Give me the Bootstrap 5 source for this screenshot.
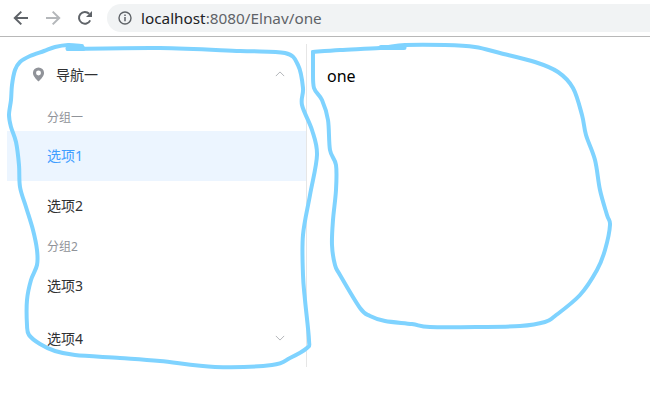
<!doctype html>
<html lang="zh-CN">
<head>
<meta charset="utf-8">
<title>Elnav</title>
<link rel="stylesheet" href="https://cdn.jsdelivr.net/npm/bootstrap@5.3.0/dist/css/bootstrap.min.css">
<style>
html,body{height:412px;overflow:hidden;background:#fff}
body{font-family:"Noto Sans","Noto Sans CJK SC",sans-serif;position:relative}
.chrome-bar{height:37px;border-bottom:1px solid #b8b8b8;padding-left:5px}
.tool-btn{width:32px;flex:none;display:flex;justify-content:center}
.omni{height:28px;width:543px;margin-left:6px;background:#f1f3f4;border-radius:14px 0 0 14px;padding-left:11px;font-size:15.3px;color:#5f6368}
.omni b{font-weight:400;color:#202124}
.omni svg{margin-right:9px}
.page-wrap{padding:7px 0 0 7px}
.side-menu{width:300px;height:323px;padding-top:3px;border-right:1px solid #e6e6e6;font-size:14px;color:#303133;flex:none}
.menu-title{height:56px;padding:0 21px 2px 25px}
.menu-title svg:first-child{margin-right:11px}
.menu-group{height:28px;padding:2px 0 0 40px;font-size:12px;color:#909399}
.menu-group.g2{height:30px}
.menu-opt{height:50px;padding:0 0 2px 40px;color:#303133}
.menu-opt.on{background:#ecf5ff;color:#409eff}
.menu-opt.last{height:56px;padding-right:21px}
.pane{padding:22px 20px;font-size:16px;color:#000;line-height:20px}
.scribble{position:absolute;left:0;top:0;pointer-events:none}
</style>
</head>
<body>
<div class="chrome-bar d-flex align-items-center">
  <div class="tool-btn"><svg width="16" height="16" viewBox="0 0 16 16"><path d="M15 8H2.500M8.300 1.600 1.800 8l6.500 6.400" fill="none" stroke="#5f6368" stroke-width="2"/></svg></div>
  <div class="tool-btn"><svg width="16" height="16" viewBox="0 0 16 16"><path d="M1 8h12.500M7.700 1.600 14.200 8l-6.500 6.400" fill="none" stroke="#b4b7ba" stroke-width="2"/></svg></div>
  <div class="tool-btn"><svg width="16" height="16" viewBox="0 0 16 16"><path d="M13.200 10.400A5.900 5.900 0 1 1 12.200 3.800" fill="none" stroke="#5f6368" stroke-width="2"/><path d="M15 1v6H9z" fill="#5f6368"/></svg></div>
  <div class="omni d-flex align-items-center">
    <svg width="14" height="14" viewBox="0 0 14 14"><circle cx="7" cy="7" r="6" fill="none" stroke="#5f6368" stroke-width="1.400"/><path d="M7 6v4.200M7 3.400v1.500" stroke="#5f6368" stroke-width="1.500"/></svg>
    <span><b>localhost</b>:8080/Elnav/one</span>
  </div>
</div>
<div class="page-wrap d-flex">
  <nav class="side-menu d-flex flex-column">
    <div class="menu-title d-flex align-items-center">
      <svg width="13" height="15" viewBox="0 0 14 17"><path fill-rule="evenodd" d="M7 .5a6.300 6.300 0 0 1 6.300 6.300C13.300 11 7 16.500 7 16.500S.7 11 .7 6.800A6.300 6.300 0 0 1 7 .5zm0 3.500a2.800 2.800 0 1 0 0 5.600 2.800 2.800 0 0 0 0-5.600z" fill="#909399"/></svg>
      <span>导航一</span>
      <svg width="10" height="6" viewBox="0 0 12 7" class="ms-auto"><path d="M1 6 6 1l5 5" fill="none" stroke="#b4b6ba" stroke-width="1.200"/></svg>
    </div>
    <div class="menu-group d-flex align-items-center">分组一</div>
    <div class="menu-opt on d-flex align-items-center">选项1</div>
    <div class="menu-opt d-flex align-items-center">选项2</div>
    <div class="menu-group g2 d-flex align-items-center">分组2</div>
    <div class="menu-opt d-flex align-items-center">选项3</div>
    <div class="menu-opt last d-flex align-items-center justify-content-between"><span>选项4</span><svg width="10" height="6" viewBox="0 0 12 7"><path d="M1 1l5 5 5-5" fill="none" stroke="#b4b6ba" stroke-width="1.200"/></svg></div>
  </nav>
  <main class="pane flex-grow-1">one</main>
</div>
<svg class="scribble" width="650" height="412" viewBox="0 0 650 412" fill="none" stroke="#7fd3ff" stroke-width="4" stroke-linejoin="round" stroke-linecap="round">
  <path data-pts="82,46 68,45 55,47 44,51 30,56 20,62 15,70 12,85 11,100 9,115 11,127 16,142 19,165 20,187 26,207 33,230 37,250 37,265 31,280 27,300 27,325 29,335 40,344 55,351 75,355 120,358 160,361 215,367 272,365 290,358 307,348 309,340 305,300 303,275 303,235 310,195 317,155 312,130 302,105 303,88 298,65 285,53 240,51 160,48 68,49"/>
  <path d="M68 48.500H83" stroke-width="5"/>
  <path data-pts="313,52 340,50 380,48 405,45 445,45 475,47 500,53 535,62 558,72 573,88 582,115 586,135 595,160 600,190 607,215 610,225 605,250 597,270 580,295 555,316 545,322 520,326 480,327 430,327 412,324 385,321 370,316 360,308 340,275 335,265 332,245 333,220 336,190 336,165 330,150 328,120 322,100 314,88 313,70"/>
  <path d="M313 70V52" />
  <path d="M381 47.500H404" stroke-width="5"/>
</svg>
<script>
document.querySelectorAll('[data-pts]').forEach(function(el){
  var p=el.dataset.pts.split(' ').map(function(s){return s.split(',').map(Number)});
  var d='M'+p[0];
  for(var i=0;i<p.length-1;i++){
    var a=p[i-1]||p[i],b=p[i],c=p[i+1],e=p[i+2]||c;
    d+=' C'+[b[0]+(c[0]-a[0])/6,b[1]+(c[1]-a[1])/6,c[0]-(e[0]-b[0])/6,c[1]-(e[1]-b[1])/6,c[0],c[1]].join(' ');
  }
  el.setAttribute('d',d);
});
</script>
</body>
</html>
